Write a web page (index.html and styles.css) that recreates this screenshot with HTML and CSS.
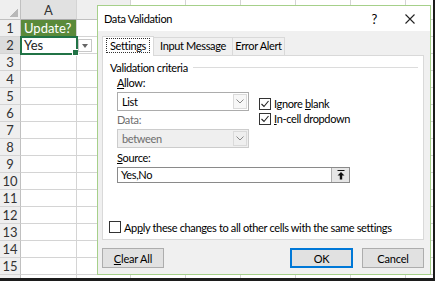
FILE: index.html
```html
<!DOCTYPE html>
<html lang="en">
<head>
    <meta charset="UTF-8">
    <title>Data Validation</title>
    <link rel="stylesheet" href="styles.css">
</head>
<body>
    <div class="sheet">
        <div class="row head">
            <div class="rh corner"></div>
            <div class="ch sel">A</div>
            <div class="ch b"></div>
            <div class="ch rest"></div>
        </div>
        <div class="row"><div class="rh">1</div><div class="c a filled">Update?</div><div class="c b"></div><div class="rest"></div></div>
        <div class="row"><div class="rh sel">2</div><div class="c a active">Yes</div><div class="c b"><span class="dd"></span></div><div class="rest"></div></div>
        <div class="row"><div class="rh">3</div><div class="c a"></div><div class="c b"></div><div class="rest"></div></div>
        <div class="row"><div class="rh">4</div><div class="c a"></div><div class="c b"></div><div class="rest"></div></div>
        <div class="row"><div class="rh">5</div><div class="c a"></div><div class="c b"></div><div class="rest"></div></div>
        <div class="row"><div class="rh">6</div><div class="c a"></div><div class="c b"></div><div class="rest"></div></div>
        <div class="row"><div class="rh">7</div><div class="c a"></div><div class="c b"></div><div class="rest"></div></div>
        <div class="row"><div class="rh">8</div><div class="c a"></div><div class="c b"></div><div class="rest"></div></div>
        <div class="row"><div class="rh">9</div><div class="c a"></div><div class="c b"></div><div class="rest"></div></div>
        <div class="row"><div class="rh">10</div><div class="c a"></div><div class="c b"></div><div class="rest"></div></div>
        <div class="row"><div class="rh">11</div><div class="c a"></div><div class="c b"></div><div class="rest"></div></div>
        <div class="row"><div class="rh">12</div><div class="c a"></div><div class="c b"></div><div class="rest"></div></div>
        <div class="row"><div class="rh">13</div><div class="c a"></div><div class="c b"></div><div class="rest"></div></div>
        <div class="row"><div class="rh">14</div><div class="c a"></div><div class="c b"></div><div class="rest"></div></div>
        <div class="row"><div class="rh">15</div><div class="c a"></div><div class="c b"></div><div class="rest"></div></div>
        <div class="row"><div class="rh"></div><div class="c a"></div><div class="c b"></div><div class="rest"></div></div>
    </div>

    <div class="dialog">
        <div class="titlebar">
            <span class="title">Data Validation</span>
            <span class="help">?</span>
            <svg class="close" width="10" height="10" viewBox="0 0 10 10">
                <path d="M0.5 0.5 L9.5 9.5 M9.5 0.5 L0.5 9.5" stroke="#222" stroke-width="1.1" fill="none"/>
            </svg>
        </div>
        <div class="dbody">
            <div class="tabs">
                <div class="tab on"><span class="focus">Settings</span></div>
                <div class="tab msg">Input Message</div>
                <div class="tab err">Error Alert</div>
            </div>
            <div class="panel">
                <div class="legend">Validation criteria</div>
                <div class="criteria">
                    <div class="cols">
                        <div class="left">
                            <div class="lbl"><u>A</u>llow:</div>
                            <div class="select">
                                <span class="val">List</span>
                                <span class="arrow"><svg width="8" height="5" viewBox="0 0 8 5"><path d="M0.5 0.5 L4 4 L7.5 0.5" stroke="#888" fill="none"/></svg></span>
                            </div>
                            <div class="lbl off">Data:</div>
                            <div class="select disabled">
                                <span class="val">between</span>
                                <span class="arrow"><svg width="8" height="5" viewBox="0 0 8 5"><path d="M0.5 0.5 L4 4 L7.5 0.5" stroke="#888" fill="none"/></svg></span>
                            </div>
                        </div>
                        <div class="right">
                            <div class="check">
                                <span class="box"><svg width="10" height="10" viewBox="0 0 10 10"><path d="M1.5 5 L4 7.5 L8.5 2" stroke="#222" stroke-width="1.1" fill="none"/></svg></span>
                                <span>Ignore <u>b</u>lank</span>
                            </div>
                            <div class="check">
                                <span class="box"><svg width="10" height="10" viewBox="0 0 10 10"><path d="M1.5 5 L4 7.5 L8.5 2" stroke="#222" stroke-width="1.1" fill="none"/></svg></span>
                                <span><u>I</u>n-cell dropdown</span>
                            </div>
                        </div>
                    </div>
                    <div class="lbl"><u>S</u>ource:</div>
                    <div class="source">
                        <span class="val">Yes,No</span>
                        <span class="pick"><svg width="8" height="10" viewBox="0 0 8 10"><path d="M0.5 0.5 H7.5" stroke="#111" fill="none"/><path d="M4 2 L0.5 5.5 H2.8 V9.5 H5.2 V5.5 H7.5 Z" fill="#111"/></svg></span>
                    </div>
                </div>
                <div class="check apply">
                    <span class="box"></span>
                    <span>Ap<u>p</u>ly these changes to all other cells with the same settings</span>
                </div>
            </div>
            <div class="btns">
                <button class="btn"><u>C</u>lear All</button>
                <button class="btn ok">OK</button>
                <button class="btn">Cancel</button>
            </div>
        </div>
    </div>
</body>
</html>
```

FILE: styles.css
```css
* {
    box-sizing: border-box;
}
body {
    margin: 0;
    width: 435px;
    height: 281px;
    overflow: hidden;
    background-color: #1c1c1c;
    font-family: "Lato", Arial, sans-serif;
    position: relative;
}

/* spreadsheet behind the dialog */
.sheet {
    width: 433px;
    height: 278px;
    overflow: hidden;
    background: #fff;
    font-size: 13px;
    color: #222;
}
.row {
    display: flex;
    height: 17px;
}
.row.head {
    height: 20px;
}
.rh {
    width: 21px;
    flex: none;
    background: #efefef;
    border-right: 1px solid #c0c0c0;
    border-bottom: 1px solid #d4d4d4;
    text-align: center;
    line-height: 16px;
    color: #333;
}
.rh.sel {
    background: #dcdcdc;
}
.rh.corner {
    background: #efefef linear-gradient(135deg, transparent 50%, #b8b8b8 50%) no-repeat;
    background-size: 9px 9px;
    background-position: 9px 8px;
    border-bottom: 1px solid #c0c0c0;
}
.ch {
    flex: none;
    background: #efefef;
    border-right: 1px solid #d4d4d4;
    border-bottom: 1px solid #c0c0c0;
    text-align: center;
    line-height: 20px;
    color: #333;
}
.ch.sel {
    width: 56px;
    background: #e1e1e1;
    border-bottom: 1px solid #a9a9a9;
}
.ch.b {
    width: 54px;
}
.ch.rest {
    flex: 1;
    border-right: none;
}
.c {
    flex: none;
    border-right: 1px solid #d4d4d4;
    border-bottom: 1px solid #d4d4d4;
    line-height: 16px;
    padding-left: 3px;
}
.c.a {
    width: 56px;
}
.c.b {
    width: 54px;
    padding-left: 1px;
}
.rest {
    flex: 1;
    border-bottom: 1px solid #d4d4d4;
    background: repeating-linear-gradient(to right, transparent 0 54px, #d4d4d4 54px 55px);
}
.c.filled {
    background: #5a8a3a;
    color: #fff;
}
.c.active {
    position: relative;
    outline: 2px solid #217346;
    outline-offset: -1px;
}
.c.active::after {
    content: "";
    position: absolute;
    right: -3px;
    bottom: -3px;
    width: 5px;
    height: 5px;
    background: #217346;
    border: 1px solid #fff;
}
.dd {
    display: block;
    width: 14px;
    height: 13px;
    margin-top: 2px;
    border: 1px solid #c8c8c8;
    background: #fff;
    position: relative;
}
.dd::after {
    content: "";
    position: absolute;
    left: 3px;
    top: 4px;
    border-left: 3.5px solid transparent;
    border-right: 3.5px solid transparent;
    border-top: 4px solid #666;
}

/* dialog */
.dialog {
    position: absolute;
    left: 97px;
    top: 5px;
    width: 334px;
    height: 270px;
    border: 1px solid #a6d08a;
    background: #f0f0f0;
    display: flex;
    flex-direction: column;
    font-size: 11px;
    letter-spacing: -0.35px;
    color: #000;
}
.titlebar {
    height: 26px;
    background: #fff;
    display: flex;
    align-items: center;
    padding: 0 15px 0 6px;
    font-size: 11px;
}
.titlebar .title {
    flex: 1;
}
.help {
    font-size: 13px;
    margin-right: 28px;
}
.dbody {
    flex: 1;
    padding: 4px 6px 6px 4px;
    display: flex;
    flex-direction: column;
}
.tabs {
    display: flex;
    align-items: flex-end;
    height: 20px;
}
.tab {
    height: 18px;
    border: 1px solid #d9d9d9;
    border-bottom: none;
    margin-right: -1px;
    text-align: center;
    line-height: 16px;
    background: #f0f0f0;
}
.tab.on {
    width: 52px;
    height: 20px;
    background: #fff;
    padding-top: 1px;
    position: relative;
    z-index: 1;
    margin-bottom: -1px;
}
.tab.msg {
    width: 80px;
}
.tab.err {
    width: 53px;
}
.focus {
    border: 1px dotted #333;
    padding: 0 3px;
}
.panel {
    height: 185px;
    background: #fff;
    border: 1px solid #d9d9d9;
    display: flex;
    flex-direction: column;
}
.legend {
    display: flex;
    align-items: center;
    height: 14px;
    margin: 4px 5px 0 7px;
}
.legend::after {
    content: "";
    flex: 1;
    border-top: 1px solid #dcdcdc;
    margin-left: 5px;
}
.criteria {
    padding-left: 14px;
    margin-top: 2px;
}
.cols {
    display: flex;
    gap: 10px;
}
.left {
    width: 132px;
}
.right {
    padding-top: 20px;
}
.lbl {
    height: 15px;
    line-height: 14px;
}
.lbl.off {
    color: #6d6d6d;
    margin-top: 2px;
}
.select {
    display: flex;
    height: 19px;
    margin-top: 1px;
    border: 1px solid #acacac;
    background: #fff;
}
.select .val {
    flex: 1;
    padding-left: 4px;
    line-height: 17px;
}
.select .arrow {
    width: 14px;
    margin: 1px;
    border: 1px solid #dadada;
    background: #f7f7f7;
    display: flex;
    align-items: center;
    justify-content: center;
}
.select.disabled {
    background: #efefef;
    border-color: #cccccc;
    margin-bottom: 3px;
}
.select.disabled .val {
    color: #6d6d6d;
}
.select.disabled .arrow {
    background: #efefef;
}
.check {
    display: flex;
    align-items: center;
    height: 15px;
    gap: 3px;
}
.check .box {
    width: 12px;
    height: 12px;
    border: 1px solid #333;
    background: #fff;
    display: flex;
    align-items: center;
    justify-content: center;
}
.source {
    display: flex;
    width: 233px;
    height: 16px;
    margin-top: 1px;
    border: 1px solid #8a8a8a;
    background: #fff;
}
.source .val {
    flex: 1;
    padding-left: 3px;
    line-height: 14px;
}
.source .pick {
    width: 18px;
    border-left: 1px solid #adadad;
    background: #e6e6e6;
    display: flex;
    align-items: center;
    justify-content: center;
}
.check.apply {
    margin: auto 0 6px 6px;
    height: 12px;
}
.btns {
    display: flex;
    margin-top: 8px;
}
.btn {
    width: 62px;
    height: 20px;
    padding: 0;
    border: 1px solid #adadad;
    background: #e1e1e1;
    font-family: "Lato", Arial, sans-serif;
    font-size: 11px;
    letter-spacing: -0.2px;
    color: #000;
}
.btn.ok {
    width: 63px;
    margin-left: auto;
    margin-right: 9px;
    border: 2px solid #0078d7;
}
```
